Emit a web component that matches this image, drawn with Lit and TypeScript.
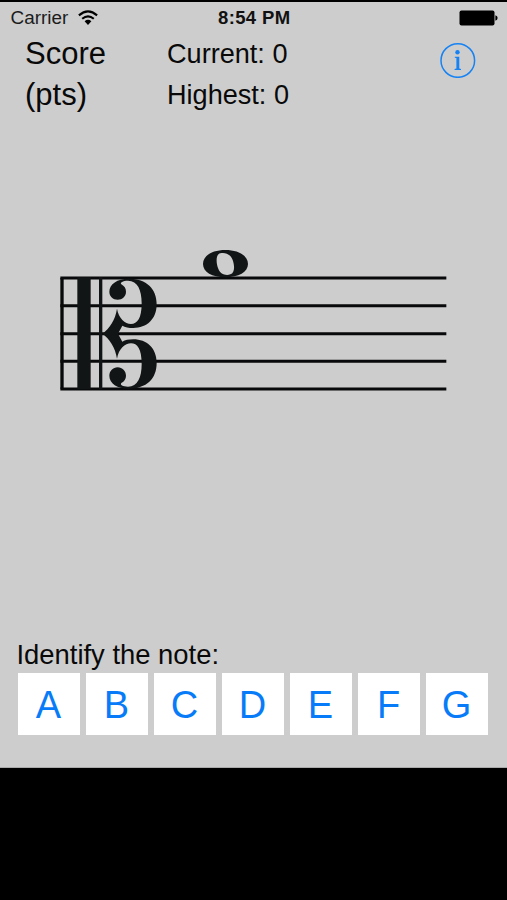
import { LitElement, html, css } from "lit";
import { customElement } from "lit/decorators.js";

@customElement("status-bar")
class StatusBar extends LitElement {
  static styles = css`
    :host { display: grid; grid-template-columns: 1fr auto 1fr; align-items: center; height: 32px; padding: 0 9px 0 10.5px; font-size: 18.9px; }
    .carrier { display: flex; align-items: center; gap: 9.5px; color: #1c1c1c; }
    .time { font-weight: bold; font-size: 18.5px; letter-spacing: 0.35px; color: #111; }
    .battery { justify-self: end; }
    svg { display: block; }
  `;
  render() {
    return html`
      <div class="carrier">
        <span>Carrier</span>
        <svg width="20" height="16" viewBox="0 0 20 16">
          <g fill="none" stroke="#000" stroke-width="2.1">
            <path d="M.9 5.4Q10-2.6 19.1 5.4" />
            <path d="M4.2 8.8Q10 3.8 15.8 8.8" />
          </g>
          <path d="M6.6 11.3Q10 8.4 13.4 11.3L10 15z" />
        </svg>
      </div>
      <span class="time">8:54 PM</span>
      <svg class="battery" width="39" height="16" viewBox="0 0 39 16">
        <rect x=".5" y=".5" width="35" height="15" rx="2" />
        <path d="M36.4 5.2Q38.6 6 38.6 8T36.4 10.8z" />
      </svg>
    `;
  }
}

@customElement("music-staff")
class MusicStaff extends LitElement {
  static styles = css`
    :host { display: block; }
    svg { display: block; }
  `;
  render() {
    return html`
      <svg width="400" height="160" viewBox="0 0 1200 480">
        <g stroke="#08090a" stroke-width="9" fill="none">
          <path d="M36 114V446" stroke-width="10" />
          <path d="M31 114H1189M31 197.5H1189M31 281H1189M31 363.5H1189M31 447H1189" />
        </g>
        <g fill="#121516">
          <path d="M82 112h40v336H82zM147 112h10v336h-10z" />
          <path d="M178 155C178 132 202 116 236 116C290 116 320 146 320 193C320 238 290 264 250 264C236 264 225 262 217 257L204 281L217 305C225 300 236 298 250 298C290 298 320 324 320 369C320 416 290 446 236 446C202 446 178 430 178 407C178 393 189 382 203 382C217 382 228 393 228 407C228 417 223 424 214 429C209 434 218 440 234 440C263 440 275 412 275 372C275 327 262 310 243 310C225 310 206 327 201 356C196 322 178 297 158 281C178 265 196 240 201 206C206 235 225 252 243 252C262 252 275 235 275 190C275 150 263 122 234 122C218 122 209 128 214 133C223 138 228 145 228 155C228 169 217 179 203 179C189 179 178 169 178 155Z" />
          <path fill-rule="evenodd" d="M459 72C459 47 486 30 526 30C566 30 594 47 594 72C594 96 566 112 526 112C486 112 459 96 459 72ZM511 40C497 43 498 66 504 84C509 101 527 109 541 103C555 98 554 77 548 60C542 43 525 36 511 40Z" />
        </g>
      </svg>
    `;
  }
}

@customElement("app-root")
class AppRoot extends LitElement {
  static styles = css`
    :host { display: block; box-sizing: border-box; width: 507px; height: 900px; background: #000; padding-top: 2px; font-family: "Liberation Sans", Arial, sans-serif; color: #090909; }
    .screen { display: flex; flex-direction: column; box-sizing: border-box; height: 766px; background: #cdcdcd; border-bottom: 1px solid #aaa; }
    .header { display: grid; grid-template-columns: 142px 1fr 36px; padding: 0 31px 0 25px; height: 84px; }
    .title { font-size: 31px; line-height: 41px; margin-top: -1.5px; }
    .scores { font-size: 27.1px; line-height: 41px; margin-top: -1px; }
    .info { margin-top: 8px; }
    .staff { margin: 122px 0 0 50px; }
    .prompt { margin: 238px 0 2px 16.5px; font-size: 27.4px; line-height: 33px; }
    .answers { display: grid; grid-template-columns: repeat(7, 62px); gap: 6px; margin-left: 18px; }
    .answer { display: block; height: 62px; padding: 0 1px 0 0; border: 0; background: #fff; color: #087cf8; font: 38px/64px "Liberation Sans", Arial, sans-serif; text-align: center; }
  `;
  render() {
    return html`
      <div class="screen">
        <status-bar></status-bar>
        <div class="header">
          <div class="title">Score<br />(pts)</div>
          <div class="scores"><div>Current: 0</div><div>Highest: 0</div></div>
          <svg class="info" width="36" height="36" viewBox="0 0 36 36" role="img" aria-label="Info">
            <circle cx="17.8" cy="18.5" r="16.8" fill="none" stroke="#1682f4" stroke-width="1.5" />
            <g fill="#1682f4">
              <circle cx="17.5" cy="10.3" r="2.2" />
              <path d="M14.8 14.8H19.3V26.6L21 27.1V28H14.6V27.1L16.4 26.6V16.1L14.8 15.7z" />
            </g>
          </svg>
        </div>
        <music-staff class="staff"></music-staff>
        <div class="prompt">Identify the note:</div>
        <div class="answers">
          ${["A", "B", "C", "D", "E", "F", "G"].map((n) => html`<button class="answer">${n}</button>`)}
        </div>
      </div>
    `;
  }
}
